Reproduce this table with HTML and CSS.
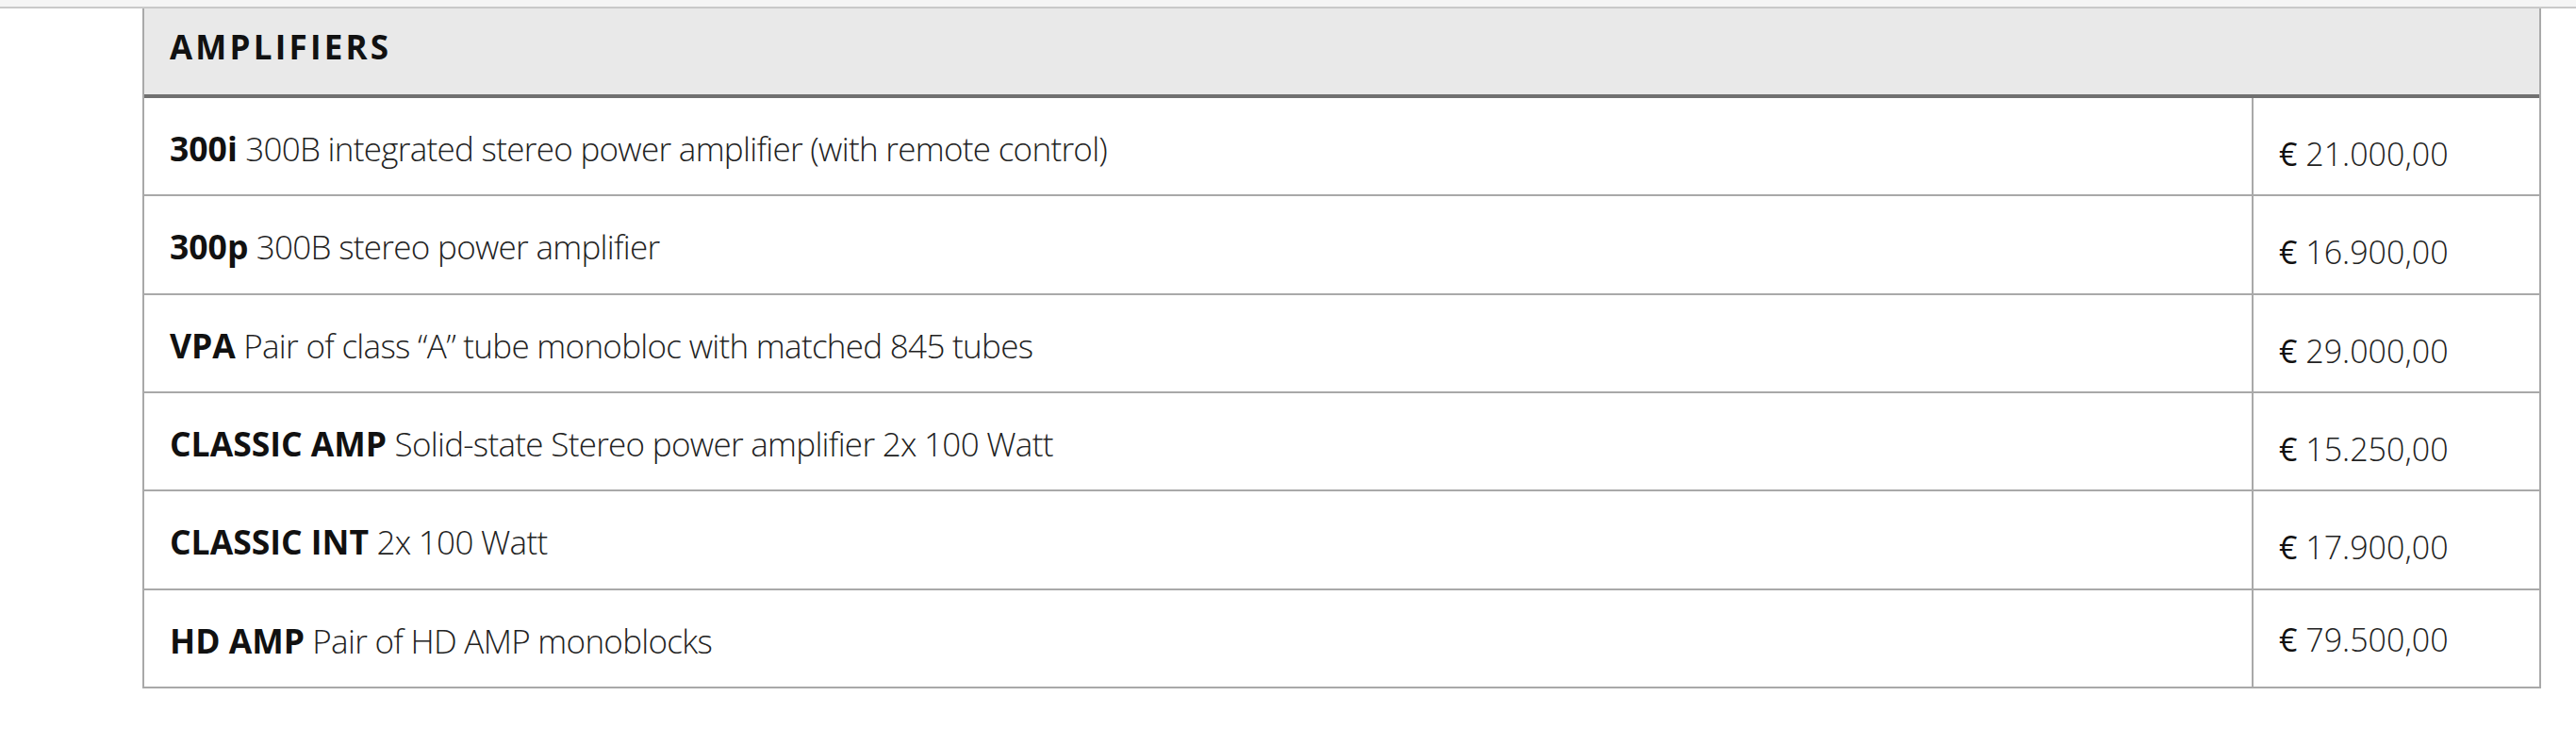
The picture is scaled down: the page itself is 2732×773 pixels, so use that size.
FILE: index.html
```html
<!DOCTYPE html>
<html lang="en">
<head>
<meta charset="utf-8">
<title>Amplifiers</title>
<link rel="stylesheet" href="styles.css">
</head>
<body>
<div class="topbar"></div>
<div class="price-table">
  <div class="head"><h2 class="head-title">AMPLIFIERS</h2></div>
  <div class="row">
    <div class="desc"><span><b class="model">300i</b> 300B integrated stereo power amplifier (with remote control)</span></div>
    <div class="price"><span><span class="euro">€</span> 21.000,00</span></div>
  </div>
  <div class="row">
    <div class="desc"><span><b class="model">300p</b> 300B stereo power amplifier</span></div>
    <div class="price"><span><span class="euro">€</span> 16.900,00</span></div>
  </div>
  <div class="row">
    <div class="desc"><span><b class="model">VPA</b> Pair of class “A” tube monobloc with matched 845 tubes</span></div>
    <div class="price"><span><span class="euro">€</span> 29.000,00</span></div>
  </div>
  <div class="row">
    <div class="desc"><span><b class="model">CLASSIC AMP</b> Solid-state Stereo power amplifier 2x 100 Watt</span></div>
    <div class="price"><span><span class="euro">€</span> 15.250,00</span></div>
  </div>
  <div class="row">
    <div class="desc"><span><b class="model">CLASSIC INT</b> 2x 100 Watt</span></div>
    <div class="price"><span><span class="euro">€</span> 17.900,00</span></div>
  </div>
  <div class="row row-last">
    <div class="desc"><span><b class="model">HD AMP</b> Pair of HD AMP monoblocks</span></div>
    <div class="price price-last"><span><span class="euro">€</span> 79.500,00</span></div>
  </div>
</div>
</body>
</html>
```
FILE: styles.css
```css
* { box-sizing: border-box; }
html, body { margin: 0; padding: 0; background: #fff; }
body {
  font-family: "Open Sans", "Liberation Sans", sans-serif;
  color: #222;
}
.topbar {
  height: 9px;
  background: #f5f5f5;
  border-bottom: 2px solid #c9c9c9;
}
.price-table {
  margin-left: 151px;
  width: 2544px;
  border: 2px solid #a9a9a9;
  border-top: none;
}
.head {
  height: 95px;
  background: #e9e9e9;
  border-bottom: 4px solid #707070;
  display: flex;
  align-items: center;
  padding: 0 0 10px 27px;
}
.head-title {
  margin: 0;
  font-size: 35px;
  font-weight: 700;
  letter-spacing: 3.2px;
  color: #111;
}
.row {
  display: flex;
  height: 104.33px;
  border-bottom: 2px solid #a9a9a9;
}
.row-last { height: 102.33px; border-bottom: none; }
.desc {
  flex: 1;
  display: flex;
  align-items: center;
  padding: 4px 0 0 27px;
  font-size: 35px;
  font-weight: 300;
  letter-spacing: -0.7px;
  color: #222;
}
.model {
  font-size: 35.5px;
  font-weight: 700;
  letter-spacing: 0;
  color: #111;
}
.price {
  width: 305px;
  border-left: 2px solid #a9a9a9;
  display: flex;
  align-items: center;
  padding: 16px 0 0 27px;
  font-size: 34px;
  font-weight: 300;
  color: #222;
}
.price-last { padding-top: 3px; }
.euro { font-weight: 500; color: #111; }
```
